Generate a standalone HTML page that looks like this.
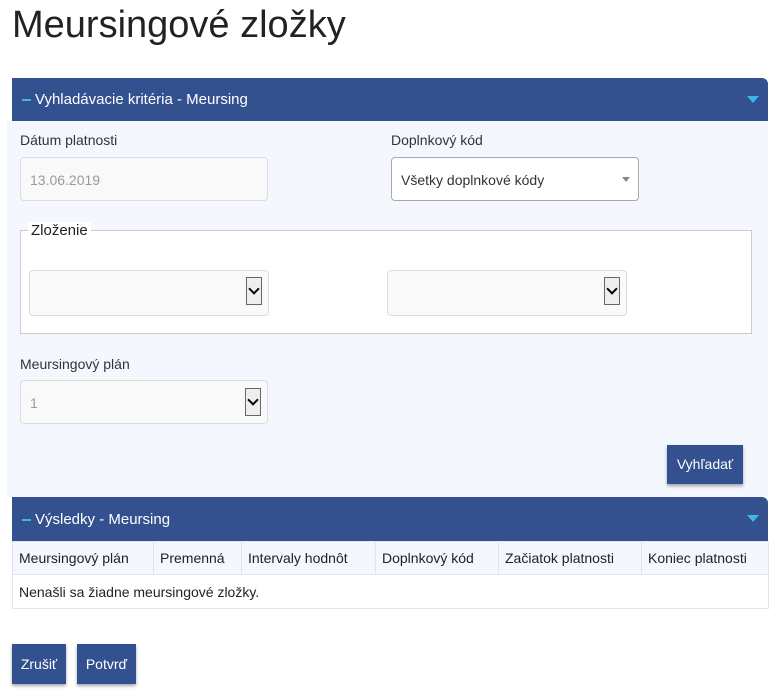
<!DOCTYPE html>
<html><head><meta charset="utf-8"><style>
body{margin:0;width:780px;height:695px;background:#fff;font-family:"Liberation Sans",sans-serif;color:#333;position:relative;overflow:hidden}
.a{position:absolute}
h1{position:absolute;left:12px;top:4px;margin:0;font-weight:normal;font-size:38px;color:#222}
.hdr{background:#33508f;color:#fff;font-size:15px;border-radius:0 6px 0 0}
.hdr .t{position:absolute;left:10px;top:13px}
.hdr .t b{display:inline-block;width:9px;height:2px;background:#3fb6e8;vertical-align:middle;margin-right:4px;font-weight:normal}
.tri{position:absolute;right:9px;top:18px;width:0;height:0;border-left:6px solid transparent;border-right:6px solid transparent;border-top:7px solid #3fb6e8}
.lbl{font-size:14px;color:#333}
.inp{background:#f9f9f9;border:1px solid #ddd;border-radius:4px;font-size:14px;color:#999;box-sizing:border-box}
.sel{position:absolute;right:6px;top:6px;width:16px;height:28px;border:1px solid #666;background:#eee;box-sizing:border-box}
.sel:after{content:"";position:absolute;left:3px;top:7px;width:6px;height:6px;border-right:2px solid #000;border-bottom:2px solid #000;transform:rotate(45deg)}
.btn{background:#33508f;color:#fff;font-size:14px;text-align:center;box-shadow:0 2px 3px rgba(0,0,0,.35)}
table{border-collapse:collapse;font-size:14px}
td{border:1px solid #dde6f3;padding:0 6px;height:32px;color:#222}
</style></head><body>
<h1>Meursingové zložky</h1>
<div class="a" style="left:7px;top:121px;width:761px;height:376px;background:#f4f7fd"></div>
<div class="a hdr" style="left:12px;top:78px;width:756px;height:43px"><span class="t"><b></b>Vyhladávacie kritéria - Meursing</span><span class="tri"></span></div>
<div class="a lbl" style="left:20px;top:132px">Dátum platnosti</div>
<div class="a inp" style="left:20px;top:157px;width:248px;height:44px;padding:14px 9px">13.06.2019</div>
<div class="a lbl" style="left:391px;top:132px">Doplnkový kód</div>
<div class="a inp" style="left:391px;top:157px;width:248px;height:44px;padding:14px 9px;background:#fff;border-color:#aaa;color:#333">Všetky doplnkové kódy<span style="position:absolute;right:8px;top:19px;border-left:4px solid transparent;border-right:4px solid transparent;border-top:5px solid #888"></span></div>
<div class="a" style="left:20px;top:230px;width:732px;height:104px;background:#fff;border:1px solid #ccc;box-sizing:border-box"></div>
<div class="a lbl" style="left:28px;top:222px;background:#fff;padding:0 3px;color:#222;font-size:15px">Zloženie</div>
<div class="a inp" style="left:29px;top:270px;width:240px;height:46px"><span class="sel"></span></div>
<div class="a inp" style="left:387px;top:270px;width:240px;height:46px"><span class="sel"></span></div>
<div class="a lbl" style="left:20px;top:356px">Meursingový plán</div>
<div class="a inp" style="left:20px;top:380px;width:248px;height:44px;padding:14px 9px">1<span class="sel" style="right:6px;top:7px"></span></div>
<div class="a btn" style="left:667px;top:445px;width:76px;height:39px;line-height:39px">Vyhľadať</div>
<div class="a hdr" style="left:12px;top:497px;width:756px;height:44px"><span class="t" style="top:14px"><b></b>Výsledky - Meursing</span><span class="tri"></span></div>
<table class="a" style="left:12px;top:541px;width:757px;background:#fff">
<tr style="background:#f4f7fd"><td style="width:128px">Meursingový plán</td><td style="width:75px">Premenná</td><td style="width:121px">Intervaly hodnôt</td><td style="width:110px">Doplnkový kód</td><td style="width:130px">Začiatok platnosti</td><td>Koniec platnosti</td></tr>
<tr><td colspan="6" style="height:33px">Nenašli sa žiadne meursingové zložky.</td></tr>
</table>
<div class="a btn" style="left:12px;top:644px;width:54px;height:40px;line-height:40px">Zrušiť</div>
<div class="a btn" style="left:77px;top:644px;width:59px;height:40px;line-height:40px">Potvrď</div>
</body></html>
